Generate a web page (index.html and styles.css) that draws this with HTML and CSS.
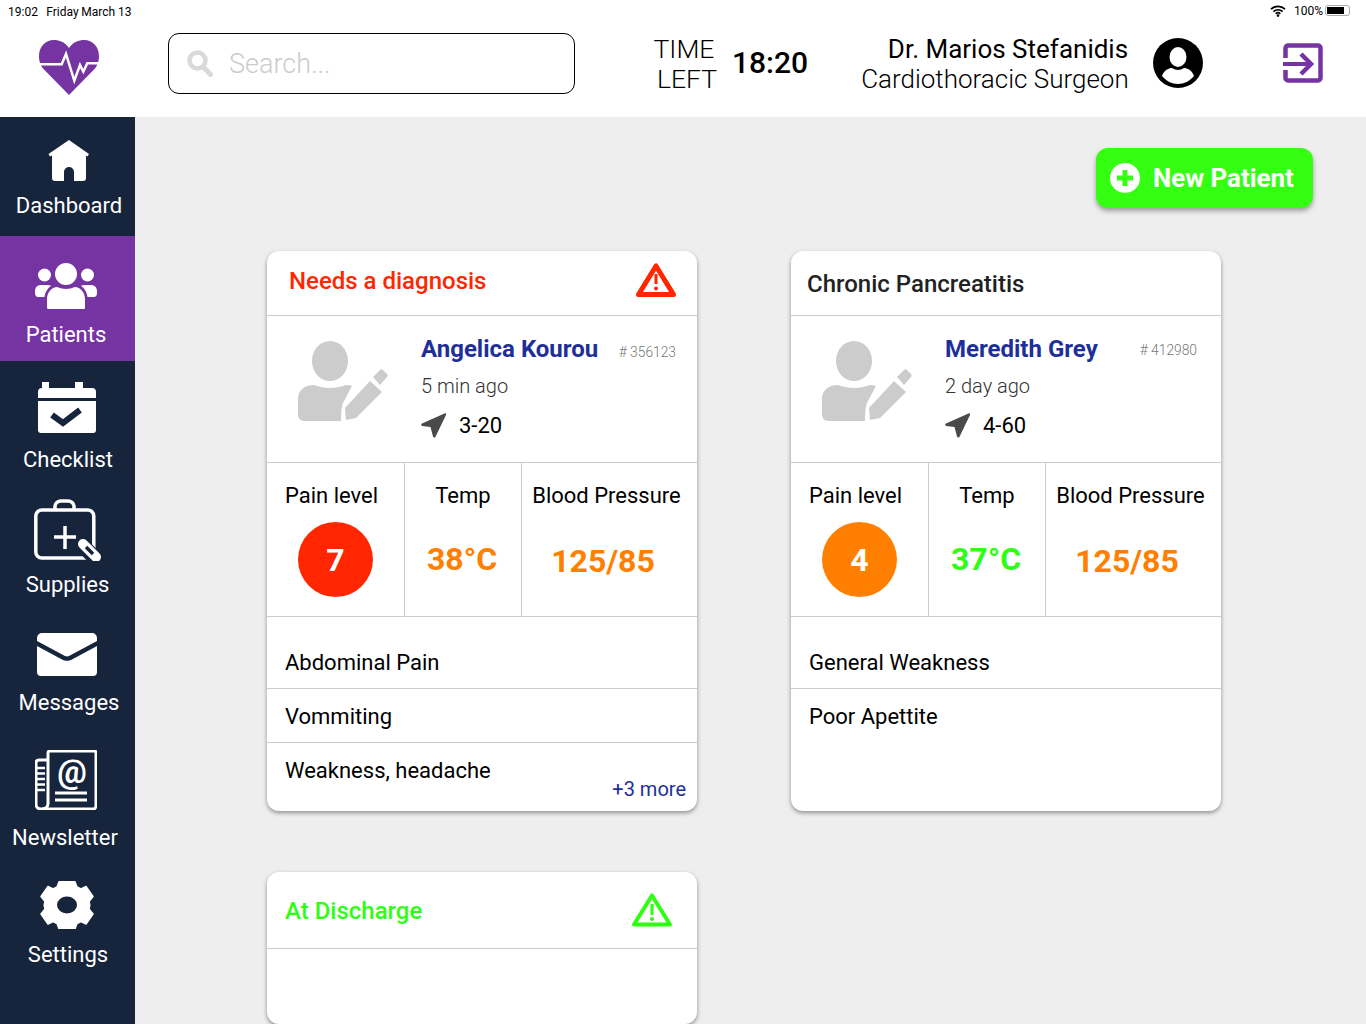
FILE: index.html
```html
<!DOCTYPE html>
<html lang="en">
  <head>
    <meta charset="UTF-8" />
    <meta name="viewport" content="width=device-width, initial-scale=1.0" />
    <title>Patients</title>
    <link rel="stylesheet" href="styles.css">
  </head>
  <body>
    <div class="statusbar">
      <span class="status-time">19:02&nbsp;&nbsp;&nbsp;Friday March 13</span>
      <div class="status-right">
        <svg width="16" height="12" viewBox="0 0 16 12"><path d="M1 4.2a10 10 0 0 1 14 0M3.4 6.6a6.6 6.6 0 0 1 9.2 0M5.7 8.8a3.3 3.3 0 0 1 4.6 0" fill="none" stroke="#000" stroke-width="1.7"/><circle cx="8" cy="10.6" r="1.3"/></svg>
        <span class="battery-text">100%</span>
        <span class="battery"><span class="battery-fill"></span></span>
      </div>
    </div>

    <header class="topbar">
      <svg class="logo" width="60" height="55" viewBox="0 0 60 55">
        <path d="M30 8C26 2 20 0 15 0 6 0 0 7 0 16c0 6 2 10 4 12.500L30 55l26-26.500c2-2.500 4-6.500 4-12.500C60 7 54 0 45 0c-5 0-11 2-15 8z" fill="#7634a3"/>
        <path d="M0 24.300h22.700L27 14l8.300 26.700L41 25l3.300 6.700 4-8.400H60" fill="none" stroke="#fff" stroke-width="2.500"/>
      </svg>
      <div class="search">
        <svg width="26" height="27" viewBox="0 0 26 27"><circle cx="10.5" cy="10.5" r="8" fill="none" stroke="#d9d9d9" stroke-width="4.5"/><path d="M16.5 17l7 7.5" stroke="#d9d9d9" stroke-width="5" stroke-linecap="round"/></svg>
        <span class="search-text">Search...</span>
      </div>
      <div class="time-label">TIME<span class="time-left">LEFT</span></div>
      <div class="time-value">18:20</div>
      <div class="doctor">
        <div class="doctor-name">Dr. Marios Stefanidis</div>
        <div class="doctor-role">Cardiothoracic Surgeon</div>
      </div>
      <svg class="avatar" width="50" height="50" viewBox="0 0 50 50">
        <circle cx="25" cy="25" r="25"/>
        <ellipse cx="25" cy="19" rx="8.5" ry="10" fill="#fff"/>
        <path d="M9 38c2-6 7-8 10-8 2 1 4 2 6 2s4-1 6-2c3 0 8 2 10 8-4 5-10 8-16 8S13 43 9 38z" fill="#fff"/>
      </svg>
      <svg class="exit" width="40" height="40" viewBox="0 0 40 40">
        <path d="M2.500 15V5a2.500 2.500 0 0 1 2.500-2.500h30A2.500 2.500 0 0 1 37.500 5v30a2.500 2.500 0 0 1-2.500 2.500H5A2.500 2.500 0 0 1 2.500 35V27" fill="none" stroke="#7634a3" stroke-width="4.500"/>
        <path d="M0 21h27" fill="none" stroke="#7634a3" stroke-width="4"/>
        <path d="M18 11l10 10-10 10" fill="none" stroke="#7634a3" stroke-width="4.500"/>
      </svg>
    </header>

    <div class="layout">
      <nav class="sidebar">
        <a class="nav-item nav-dashboard">
          <svg width="42" height="43" viewBox="0 0 42 43"><path d="M21 0L41 14l-1.500 2.500L38 15.500V38a3 3 0 0 1-3 3H26V32a5 5 0 0 0-10 0v9H7a3 3 0 0 1-3-3V15.500L2 16.500 .5 14z" fill="#fff"/></svg>
          <span>Dashboard</span>
        </a>
        <a class="nav-item nav-patients active">
          <svg width="64" height="46" viewBox="0 0 64 46">
            <g fill="#fff">
              <circle cx="31" cy="11" r="11"/><circle cx="9.500" cy="12" r="6.500"/><circle cx="52.500" cy="12" r="6.500"/>
              <path d="M12 45V36c0-7 5-12 10-12 3 1 6 2 9 2s6-1 9-2c5 0 10 5 10 12v9a1 1 0 0 1-1 1H14a2 2 0 0 1-2-1z"/>
              <path d="M0 28c0-4 3-6 6-6h7c2 0 3 1 3 1-3 2-6 6-6.500 11H3c-2 0-3-2-3-4z"/>
              <path d="M62 28c0-4-3-6-6-6h-7c-2 0-3 1-3 1 3 2 6 6 6.500 11H59c2 0 3-2 3-4z"/>
            </g>
          </svg>
          <span>Patients</span>
        </a>
        <a class="nav-item nav-checklist">
          <svg width="58" height="51" viewBox="0 0 58 51">
            <path d="M4 6h0V0h7v6h26V0h8v6h9a4 4 0 0 1 4 4v6H0v-6a4 4 0 0 1 4-4z" fill="#fff"/>
            <path d="M0 19h58v29a3 3 0 0 1-3 3H3a3 3 0 0 1-3-3z" fill="#fff"/>
            <path d="M14 33l11 8 17-13" fill="none" stroke="#16243c" stroke-width="6"/>
          </svg>
          <span>Checklist</span>
        </a>
        <a class="nav-item nav-supplies">
          <svg width="68" height="62" viewBox="0 0 68 62">
            <rect x="1.800" y="11" width="58" height="48" rx="6" fill="none" stroke="#fff" stroke-width="3.500"/>
            <path d="M21 11V7a6 6 0 0 1 6-5h7a6 6 0 0 1 6 5v4" fill="none" stroke="#fff" stroke-width="3.500"/>
            <path d="M31 27v23M20 38h22" stroke="#fff" stroke-width="3.500"/>
            <path d="M47 45l14 14" stroke="#16243c" stroke-width="15"/>
            <path d="M49 45l13 13" stroke="#fff" stroke-width="10" stroke-linecap="round"/>
            <path d="M52 48l7 7" stroke="#16243c" stroke-width="3.500"/>
          </svg>
          <span>Supplies</span>
        </a>
        <a class="nav-item nav-messages">
          <svg width="60" height="43" viewBox="0 0 60 43">
            <path d="M0 5a5 5 0 0 1 5-5h50a5 5 0 0 1 5 5v3L32 23c-1 .6-3 .6-4 0L0 8z" fill="#fff"/>
            <path d="M0 13l26 14c2 1 6 1 8 0l26-14v26a4 4 0 0 1-4 4H4a4 4 0 0 1-4-4z" fill="#fff"/>
          </svg>
          <span>Messages</span>
        </a>
        <a class="nav-item nav-newsletter">
          <svg width="62" height="60" viewBox="0 0 62 60">
            <path d="M13 54V3a2 2 0 0 1 2-2h44a2 2 0 0 1 2 2v53a3 3 0 0 1-3 3H6c-3 0-5-2-5-5V13c0-2 1-3 3-3h9" fill="none" stroke="#fff" stroke-width="3"/>
            <path d="M13 54c0 3-3 5-6 5" fill="none" stroke="#fff" stroke-width="3"/>
            <path d="M2 18h8M2 23.500h8M2 29h8M2 34.500h8M2 40h8" stroke="#fff" stroke-width="2.500"/>
            <text class="nl-at" x="37" y="33" text-anchor="middle">@</text>
            <path d="M20 43h32M20 50h32" stroke="#fff" stroke-width="3"/>
          </svg>
          <span>Newsletter</span>
        </a>
        <a class="nav-item nav-settings">
          <svg width="56" height="48" viewBox="0 0 56 48">
            <path d="M20 .8h16l2 5.200 4 2 5-2.500 7 10-4 5 .8 3.500-.8 4 4 5-7 10-5-2.500-4 2-2 5.200H20l-2-5.200-4-2-5 2.500-7-10 4-5-.8-4 .8-3.500-4-5 7-10 5 2.500 4-2z" fill="#fff" stroke="#fff" stroke-width="1.500" stroke-linejoin="round"/>
            <ellipse cx="28" cy="24" rx="10" ry="8.500" fill="#16243c"/>
          </svg>
          <span>Settings</span>
        </a>
      </nav>

      <main class="content">
        <div class="actions">
          <button class="new-patient">
            <svg width="30" height="30" viewBox="0 0 30 30"><circle cx="15" cy="15" r="15" fill="#fff"/><path d="M15 7v16M7 15h16" stroke="#34ff13" stroke-width="5"/></svg>
            New Patient
          </button>
        </div>

        <div class="cards">
          <section class="card">
            <div class="card-head head-red">
              <span>Needs a diagnosis</span>
              <svg width="40" height="34" viewBox="0 0 40 34"><path d="M20 3L2.500 31.500h35z" fill="#fff" stroke="#ff2600" stroke-width="5" stroke-linejoin="round"/><path d="M20 11v10" stroke="#ff2600" stroke-width="3"/><circle cx="20" cy="25.500" r="2" fill="#ff2600"/></svg>
            </div>
            <div class="patient">
              <svg class="patient-pic" width="90" height="80" viewBox="0 0 90 80"><ellipse cx="32" cy="20" rx="18" ry="20" fill="#ccc"/><path d="M0 74V58c0-10 8-14 16-14 5 2 11 3 16 3s11-1 16-3c2 0 4 .4 6 1L46 60c-2 3-3 8-3 20H6a6 6 0 0 1-6-6z" fill="#ccc"/><path d="M50 80l-1-12 25-27 12 11-26 26zM77 37l7-7c1-1 2-1 3 0l4 4c1 1 1 2 0 3l-7 8z" fill="#ccc" transform="translate(-2 -1)"/></svg>
              <div class="patient-info">
                <div class="patient-row">
                  <span class="patient-name">Angelica Kourou</span>
                  <span class="patient-id id-low">#&nbsp;356123</span>
                </div>
                <div class="patient-ago">5 min ago</div>
                <div class="patient-bed">
                  <svg width="25" height="25" viewBox="0 0 25 25"><path d="M24 .3L1 10.500c-1.200.6-.9 2.200.4 2.500L9.500 14l2.500 9.500c.4 1.300 2 1.400 2.500.2L25 2c.4-1.200-.2-2-1-1.700z" fill="#4a4a4a"/></svg>
                  <span>3-20</span>
                </div>
              </div>
            </div>
            <div class="vitals">
              <div class="vital vital-pain">
                <div class="vital-label">Pain level</div>
                <div class="pain pain-red">7</div>
              </div>
              <div class="vital vital-temp-col">
                <div class="vital-label">Temp</div>
                <div class="vital-temp orange">38°C</div>
              </div>
              <div class="vital vital-pressure">
                <div class="vital-label">Blood Pressure</div>
                <div class="vital-bp orange">125/85</div>
              </div>
            </div>
            <div class="symptoms">
              <div class="symptom first">Abdominal Pain</div>
              <div class="symptom">Vommiting</div>
              <div class="symptom last">Weakness, headache<a class="more">+3 more</a></div>
            </div>
          </section>

          <section class="card">
            <div class="card-head head-dark">
              <span>Chronic Pancreatitis</span>
            </div>
            <div class="patient">
              <svg class="patient-pic" width="90" height="80" viewBox="0 0 90 80"><ellipse cx="32" cy="20" rx="18" ry="20" fill="#ccc"/><path d="M0 74V58c0-10 8-14 16-14 5 2 11 3 16 3s11-1 16-3c2 0 4 .4 6 1L46 60c-2 3-3 8-3 20H6a6 6 0 0 1-6-6z" fill="#ccc"/><path d="M50 80l-1-12 25-27 12 11-26 26zM77 37l7-7c1-1 2-1 3 0l4 4c1 1 1 2 0 3l-7 8z" fill="#ccc" transform="translate(-2 -1)"/></svg>
              <div class="patient-info info-short">
                <div class="patient-row">
                  <span class="patient-name">Meredith Grey</span>
                  <span class="patient-id">#&nbsp;412980</span>
                </div>
                <div class="patient-ago">2 day ago</div>
                <div class="patient-bed">
                  <svg width="25" height="25" viewBox="0 0 25 25"><path d="M24 .3L1 10.500c-1.200.6-.9 2.200.4 2.500L9.500 14l2.500 9.500c.4 1.300 2 1.400 2.500.2L25 2c.4-1.200-.2-2-1-1.700z" fill="#4a4a4a"/></svg>
                  <span>4-60</span>
                </div>
              </div>
            </div>
            <div class="vitals">
              <div class="vital vital-pain">
                <div class="vital-label">Pain level</div>
                <div class="pain pain-orange">4</div>
              </div>
              <div class="vital vital-temp-col">
                <div class="vital-label">Temp</div>
                <div class="vital-temp green">37°C</div>
              </div>
              <div class="vital vital-pressure">
                <div class="vital-label">Blood Pressure</div>
                <div class="vital-bp orange">125/85</div>
              </div>
            </div>
            <div class="symptoms">
              <div class="symptom first">General Weakness</div>
              <div class="symptom none">Poor Apettite</div>
            </div>
          </section>

          <section class="card card-short">
            <div class="card-head head-green">
              <span>At Discharge</span>
              <svg width="40" height="34" viewBox="0 0 40 34"><path d="M20 2.500L2 31.500h36z" fill="#fff" stroke="#2eff12" stroke-width="4" stroke-linejoin="round"/><path d="M20 11v11" stroke="#2eff12" stroke-width="3"/><circle cx="20" cy="26" r="2" fill="#2eff12"/></svg>
            </div>
          </section>
        </div>
      </main>
    </div>
  </body>
</html>
```

FILE: styles.css
```css
* {
  box-sizing: border-box;
}
html,
body {
  margin: 0;
  height: 1024px;
  overflow: hidden;
}
body {
  font-family: Roboto, sans-serif;
  background: #fff;
  color: #000;
}
.statusbar {
  height: 23px;
  display: flex;
  justify-content: space-between;
  align-items: center;
  padding: 0 16px 0 8px;
  font-size: 12px;
}
.status-time {
  word-spacing: -0.2px;
}
.status-right {
  display: flex;
  align-items: center;
  margin-bottom: 2px;
}
.battery-text {
  margin-left: 8px;
}
.battery {
  width: 25px;
  height: 11px;
  margin-left: 2px;
  padding: 1px;
  border: 1px solid #aaa;
  border-radius: 3px;
}
.battery-fill {
  display: block;
  width: 17px;
  height: 7px;
  background: #000;
}
.topbar {
  height: 94px;
  display: flex;
  align-items: flex-start;
}
.logo {
  margin: 17px 0 0 39px;
}
.search {
  width: 407px;
  height: 61px;
  margin: 10px 0 0 69px;
  padding-left: 18px;
  display: flex;
  align-items: center;
  border: 1px solid #000;
  border-radius: 11px;
}
.search-text {
  margin-left: 16px;
  font-size: 27px;
  font-weight: 300;
  color: #ccc;
}
.time-label {
  width: 62px;
  margin: 11px 0 0 78px;
  font-size: 26.500px;
  font-weight: 300;
  line-height: 30px;
  text-align: center;
}
.time-left {
  display: block;
  padding-left: 4px;
}
.time-value {
  margin: 22px 0 0 17px;
  font-size: 30px;
  font-weight: 500;
  line-height: 36px;
}
.doctor {
  width: 267px;
  margin: 11px 0 0 53px;
  text-align: right;
  font-size: 26px;
  line-height: 30px;
  white-space: nowrap;
}
.doctor-role {
  font-weight: 300;
}
.avatar {
  margin: 15px 0 0 25px;
}
.exit {
  margin: 20px 0 0 80px;
}
.layout {
  display: flex;
  height: 907px;
  background: #eee;
}
.sidebar {
  width: 135px;
  flex-shrink: 0;
  background: #16243c;
  color: #fff;
}
.nav-item {
  display: flex;
  flex-direction: column;
  align-items: center;
  font-size: 22px;
}
.nav-item svg {
  display: block;
}
.nav-item span {
  display: block;
  line-height: 26px;
}
.nav-dashboard {
  height: 119px;
  padding: 23px 0 0 3px;
}
.nav-dashboard span {
  margin-top: 10px;
}
.nav-patients {
  height: 125px;
  padding: 27px 3px 0 0;
}
.nav-patients svg {
  margin-left: 2px;
}
.nav-patients span {
  margin-top: 13px;
}
.active {
  background: #7634a3;
}
.nav-checklist {
  height: 125px;
  padding: 21px 0 0 1px;
}
.nav-checklist svg {
  margin-right: 3px;
}
.nav-checklist span {
  margin-top: 14px;
}
.nav-supplies {
  height: 130px;
  padding: 13px 0 0;
}
.nav-supplies span {
  margin-top: 11px;
}
.nav-messages {
  height: 117px;
  padding: 17px 0 0 3px;
}
.nav-messages svg {
  margin-right: 4px;
}
.nav-messages span {
  margin-top: 14px;
}
.nav-newsletter {
  height: 135px;
  padding: 17px 5px 0 0;
}
.nav-newsletter svg {
  margin-left: 1px;
}
.nav-newsletter span {
  margin-top: 15px;
}
.nav-settings {
  padding: 13px 0 0 1px;
}
.nav-settings svg {
  margin-right: 2px;
}
.nav-settings span {
  margin-top: 13px;
}
.content {
  flex: 1;
  padding: 31px 53px 0 132px;
}
.actions {
  display: flex;
  justify-content: flex-end;
  margin-bottom: 43px;
}
.new-patient {
  width: 217px;
  height: 60px;
  padding: 0 0 0 14px;
  display: flex;
  align-items: center;
  gap: 13px;
  border: 0;
  border-radius: 12px;
  background: #34ff13;
  box-shadow: 0 3px 5px rgba(0, 0, 0, 0.35);
  color: #fff;
  font-family: Roboto, sans-serif;
  font-size: 25.850px;
  font-weight: 700;
}
.cards {
  display: grid;
  grid-template-columns: 430px 430px;
  column-gap: 94px;
  row-gap: 61px;
}
.card {
  height: 560px;
  background: #fff;
  border-radius: 12px;
  box-shadow: 0 2px 4px rgba(0, 0, 0, 0.4);
  overflow: hidden;
}
.card-short {
  height: 152px;
}
.card-head {
  height: 65px;
  display: flex;
  justify-content: space-between;
  align-items: center;
  border-bottom: 1px solid #ccc;
  font-size: 24px;
  font-weight: 500;
}
.card-head svg {
  margin-top: -3px;
}
.head-red {
  padding: 0 21px 4px 22px;
  color: #ff2600;
}
.head-dark {
  padding: 2px 20px 0 16px;
  color: #222;
}
.head-green {
  height: 77px;
  padding: 2px 25px 0 18px;
  color: #2eff12;
}
.patient {
  height: 147px;
  display: flex;
  border-bottom: 1px solid #ccc;
}
.patient-pic {
  margin: 25px 0 0 31px;
  flex-shrink: 0;
}
.patient-info {
  width: 255px;
  margin: 19px 0 0 33px;
}
.info-short {
  width: 252px;
}
.patient-row {
  display: flex;
  justify-content: space-between;
  align-items: flex-start;
  height: 29px;
}
.patient-name {
  font-size: 24px;
  font-weight: 700;
  line-height: 29px;
  color: #1e2f9a;
}
.patient-id {
  margin-top: 7px;
  font-size: 13.800px;
  font-weight: 300;
  color: #777;
}
.id-low {
  margin-top: 9px;
}
.patient-ago {
  margin-top: 10px;
  font-size: 20px;
  font-weight: 300;
  color: #333;
  line-height: 24px;
}
.patient-bed {
  margin-top: 15px;
  display: flex;
  align-items: center;
  gap: 13px;
  font-size: 22px;
}
.vitals {
  height: 154px;
  display: grid;
  grid-template-columns: 138px 117px 175px;
  border-bottom: 1px solid #ccc;
}
.vital {
  display: flex;
  flex-direction: column;
  align-items: center;
  padding-top: 20px;
  border-right: 1px solid #ccc;
}
.vital:last-child {
  border-right: 0;
}
.vital-pain {
  padding-right: 8px;
}
.vital-pressure {
  padding-right: 6px;
}
.vital-label {
  font-size: 22px;
  line-height: 26px;
}
.pain {
  width: 75px;
  height: 75px;
  margin: 13px 0 0 8px;
  border-radius: 50%;
  display: flex;
  justify-content: center;
  align-items: center;
  color: #fff;
  font-size: 32px;
  font-weight: 700;
}
.pain-red {
  background: #ff2600;
}
.pain-orange {
  background: #ff8000;
}
.vital-temp {
  margin: 31px 2px 0 0;
  font-size: 32px;
  font-weight: 700;
  line-height: 38px;
}
.vital-bp {
  margin-top: 33px;
  padding-right: 7px;
  font-size: 32px;
  font-weight: 700;
  line-height: 38px;
}
.orange {
  color: #ff8000;
}
.green {
  color: #2eff12;
}
.symptoms {
  font-size: 22px;
}
.symptom {
  height: 54px;
  padding: 15px 18px 0;
  line-height: 26px;
  border-bottom: 1px solid #ccc;
}
.symptom.first {
  height: 72px;
  padding-top: 33px;
}
.symptom.last,
.symptom.none {
  border-bottom: 0;
}
.more {
  display: block;
  margin: -8px -7px 0 0;
  text-align: right;
  font-size: 20px;
  color: #1e2f9a;
}
.nl-at {
  font-family: Roboto, sans-serif;
  font-size: 33px;
  font-weight: 700;
  fill: #fff;
}
```
